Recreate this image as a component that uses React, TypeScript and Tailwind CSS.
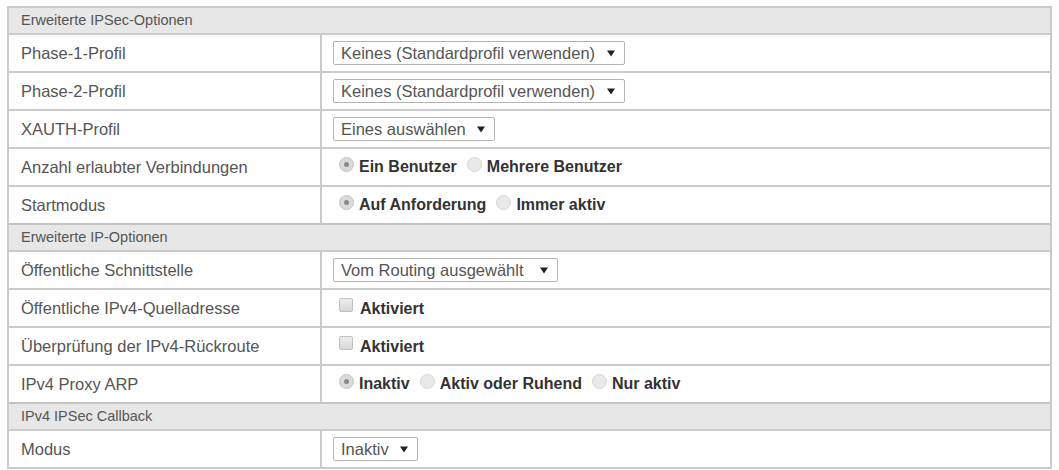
import React from 'react'

type Row =
  | { kind: 'header'; title: string }
  | { kind: 'select'; label: string; value: string; width: number }
  | { kind: 'radio'; label: string; options: string[]; checked: number }
  | { kind: 'check'; label: string; text: string }

const rows: Row[] = [
  { kind: 'header', title: 'Erweiterte IPSec-Optionen' },
  { kind: 'select', label: 'Phase-1-Profil', value: 'Keines (Standardprofil verwenden)', width: 292 },
  { kind: 'select', label: 'Phase-2-Profil', value: 'Keines (Standardprofil verwenden)', width: 292 },
  { kind: 'select', label: 'XAUTH-Profil', value: 'Eines auswählen', width: 162 },
  { kind: 'radio', label: 'Anzahl erlaubter Verbindungen', options: ['Ein Benutzer', 'Mehrere Benutzer'], checked: 0 },
  { kind: 'radio', label: 'Startmodus', options: ['Auf Anforderung', 'Immer aktiv'], checked: 0 },
  { kind: 'header', title: 'Erweiterte IP-Optionen' },
  { kind: 'select', label: 'Öffentliche Schnittstelle', value: 'Vom Routing ausgewählt', width: 225 },
  { kind: 'check', label: 'Öffentliche IPv4-Quelladresse', text: 'Aktiviert' },
  { kind: 'check', label: 'Überprüfung der IPv4-Rückroute', text: 'Aktiviert' },
  { kind: 'radio', label: 'IPv4 Proxy ARP', options: ['Inaktiv', 'Aktiv oder Ruhend', 'Nur aktiv'], checked: 0 },
  { kind: 'header', title: 'IPv4 IPSec Callback' },
  { kind: 'select', label: 'Modus', value: 'Inaktiv', width: 85 },
]

function FakeSelect({ value, width }: { value: string; width: number }) {
  return (
    <div
      className="flex h-[24px] items-center justify-between rounded-[2px] border border-[#b4b4b4] bg-white pl-[7px] pr-[9px] text-[16.5px] text-[#555]"
      style={{ width }}
    >
      <span className="leading-none">{value}</span>
      <svg width="8" height="7" viewBox="0 0 8 7">
        <path d="M0 0.5 H8 L4 6.5 Z" fill="#222" />
      </svg>
    </div>
  )
}

function Radio({ on }: { on: boolean }) {
  return on ? (
    <span className="flex h-[15px] w-[15px] -translate-y-[3px] items-center justify-center rounded-full border border-[#c4c4c4] bg-[#dadada]">
      <span className="h-[5px] w-[5px] rounded-full bg-[#8a8a8a]" />
    </span>
  ) : (
    <span className="h-[15px] w-[15px] -translate-y-[3px] rounded-full border border-[#d6d6d6] bg-[#e9e9e9]" />
  )
}

function Checkbox() {
  return (
    <span className="h-[14px] w-[14px] -translate-y-[3px] rounded-[2px] border border-[#c0c0c0] bg-gradient-to-b from-[#ececec] to-[#d8d8d8]" />
  )
}

function Value({ row }: { row: Row }) {
  if (row.kind === 'select') return <FakeSelect value={row.value} width={row.width} />
  if (row.kind === 'radio')
    return (
      <div className="flex items-center pl-[6px] text-[16px] font-bold text-[#333]">
        {row.options.map((o, i) => (
          <span key={o} className="mr-[10px] flex items-center gap-[5px]">
            <Radio on={i === row.checked} />
            <span>{o}</span>
          </span>
        ))}
      </div>
    )
  if (row.kind === 'check')
    return (
      <div className="flex items-center gap-[7px] pl-[6px] text-[16px] font-bold text-[#333]">
        <Checkbox />
        <span className="translate-y-[1px]">{row.text}</span>
      </div>
    )
  return null
}

export default function App() {
  return (
    <div className="h-[470px] w-[1059px] bg-white pl-[7px] pt-[6px]" style={{ fontFamily: '"Liberation Sans", Arial, sans-serif' }}>
      <div className="w-[1045px] border-2 border-[#cbcbcb]">
        {rows.map((row, i) =>
          row.kind === 'header' ? (
            <div
              key={i}
              className={`flex h-[25px] items-center bg-[#e7e7e7] pl-[12px] text-[14.5px] text-[#555] ${i > 0 ? 'box-content border-t-2 border-[#c4c4c4]' : ''}`}
            >
              {row.title}
            </div>
          ) : (
            <div key={i} className="box-content flex h-[36px] border-t-2 border-[#cbcbcb]">
              <div className="flex w-[311px] items-center pl-[12px] text-[16.5px] text-[#555]">{row.label}</div>
              <div className="flex flex-1 items-center border-l-2 border-[#cbcbcb] pl-[11px]">
                <Value row={row} />
              </div>
            </div>
          ),
        )}
      </div>
    </div>
  )
}
